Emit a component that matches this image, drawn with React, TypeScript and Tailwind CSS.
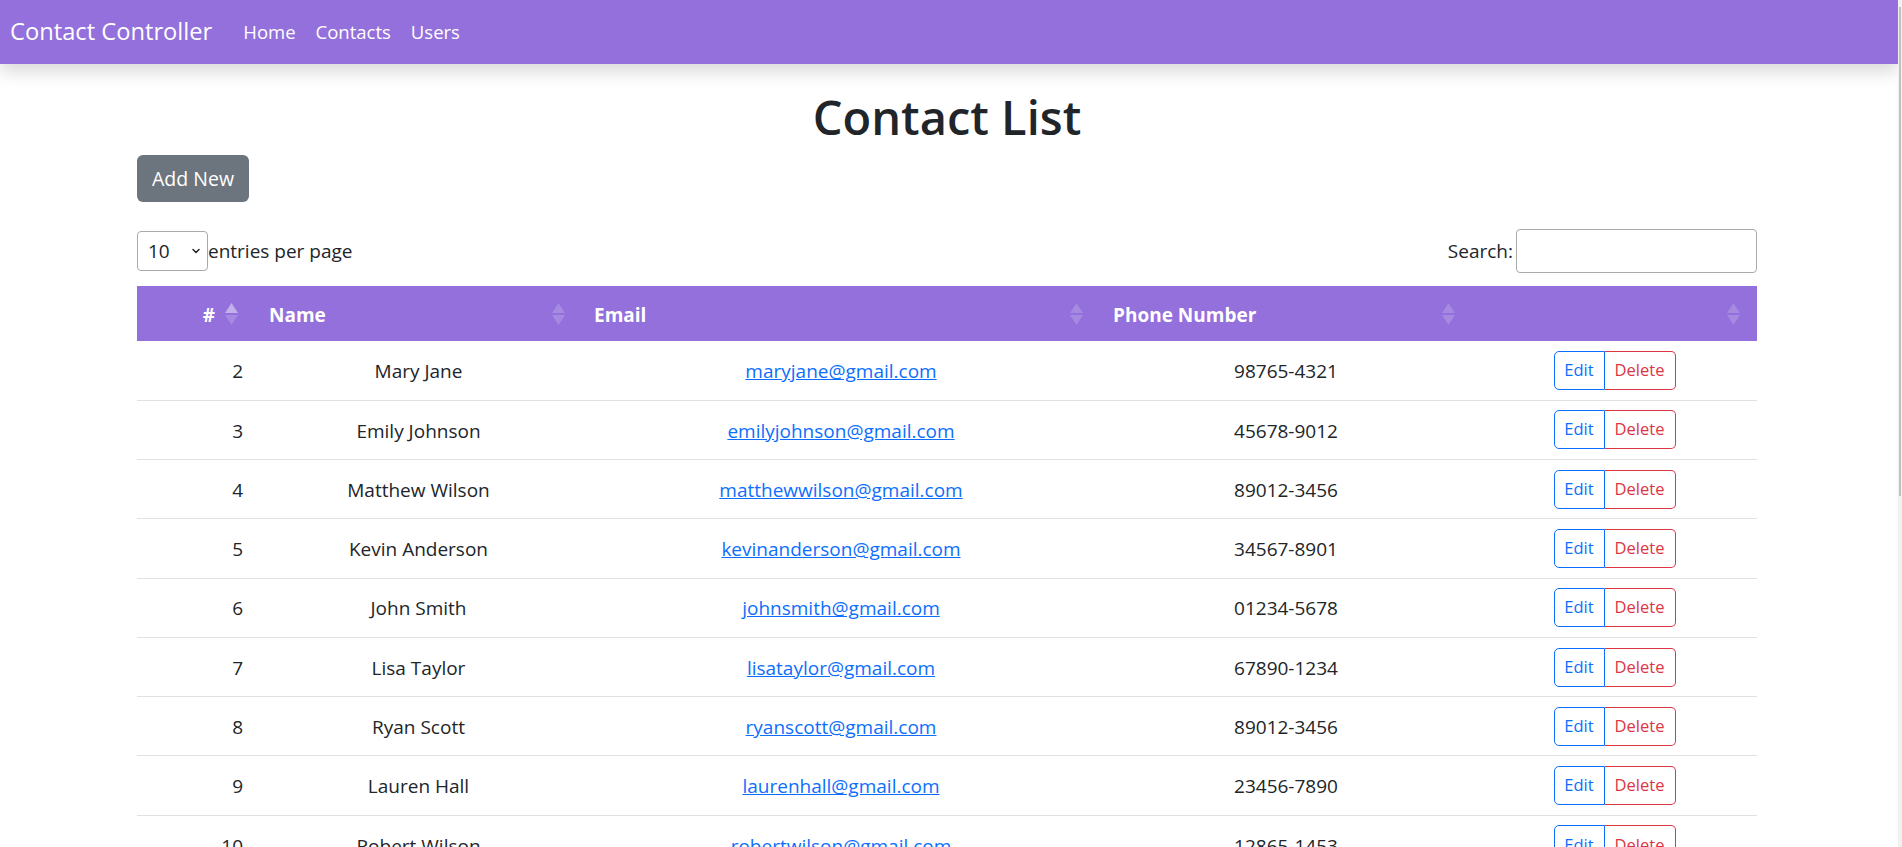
import { ChevronDown } from 'lucide-react'

const contacts = [
  { id: 2, name: 'Mary Jane', email: 'maryjane@gmail.com', phone: '98765-4321' },
  { id: 3, name: 'Emily Johnson', email: 'emilyjohnson@gmail.com', phone: '45678-9012' },
  { id: 4, name: 'Matthew Wilson', email: 'matthewwilson@gmail.com', phone: '89012-3456' },
  { id: 5, name: 'Kevin Anderson', email: 'kevinanderson@gmail.com', phone: '34567-8901' },
  { id: 6, name: 'John Smith', email: 'johnsmith@gmail.com', phone: '01234-5678' },
  { id: 7, name: 'Lisa Taylor', email: 'lisataylor@gmail.com', phone: '67890-1234' },
  { id: 8, name: 'Ryan Scott', email: 'ryanscott@gmail.com', phone: '89012-3456' },
  { id: 9, name: 'Lauren Hall', email: 'laurenhall@gmail.com', phone: '23456-7890' },
  { id: 10, name: 'Robert Wilson', email: 'robertwilson@gmail.com', phone: '12865-1453' },
  { id: 11, name: 'Sarah Brown', email: 'sarahbrown@gmail.com', phone: '56789-0123' },
]

function SortIcon({ active = false }: { active?: boolean }) {
  return (
    <svg width="13" height="22" viewBox="0 0 13 22" className="shrink-0">
      <polygon points="6.5,0 13,10 0,10" fill="white" fillOpacity={active ? 0.45 : 0.18} />
      <polygon points="0,12 13,12 6.5,22" fill="white" fillOpacity={0.18} />
    </svg>
  )
}

const cols = 'grid grid-cols-[118px_327px_518px_372px_285px]'

export default function App() {
  return (
    <div
      className="flex h-[847px] w-full overflow-hidden bg-white text-[#212529]"
      style={{ fontFamily: '"Open Sans", "Noto Sans", sans-serif' }}
    >
      <div className="flex min-w-0 flex-1 flex-col">
        <nav className="flex h-[64px] shrink-0 items-center bg-[#9370db] text-white shadow-[0_8px_16px_rgba(0,0,0,0.15)]">
          <span className="ml-[10px] text-[23.7px] leading-none">Contact Controller</span>
          <div className="ml-[21px] flex text-[18.5px]">
            <a className="px-[10px]">Home</a>
            <a className="px-[10px]">Contacts</a>
            <a className="px-[10px]">Users</a>
          </div>
        </nav>

        <main className="ml-[137px] flex w-[1620px] flex-col">
          <h1 className="mt-[25px] mb-[10px] text-center text-[47px] leading-[1.2] font-semibold">
            Contact List
          </h1>

          <div>
            <button className="h-[47px] w-[112px] rounded-[6px] bg-[#6c757d] text-[19.5px] text-white">
              Add New
            </button>
          </div>

          <div className="mt-[27px] flex h-[44px] items-center justify-between text-[19px]">
            <div className="flex items-center">
              <div className="relative h-[40px] w-[71px]">
                <select className="h-full w-full appearance-none rounded-[4px] border border-[#aaa] bg-white pl-[10px] text-[19px] outline-none">
                  <option>10</option>
                </select>
                <ChevronDown
                  className="pointer-events-none absolute top-[14px] left-[53px] h-[12px] w-[12px]"
                  strokeWidth={3}
                />
              </div>
              <span>entries per page</span>
            </div>
            <div className="flex items-center">
              <span className="mr-[3px]">Search:</span>
              <input className="h-[44px] w-[241px] rounded-[4px] border border-[#aaa] outline-none" />
            </div>
          </div>

          <div className="mt-[13px] text-[19px]">
            <div className={`${cols} h-[55px] bg-[#9370db] font-bold text-white`}>
              <div className="flex items-center justify-end gap-[10px] pr-[17px]">
                <span className="mt-[3px]">#</span>
                <SortIcon active />
              </div>
              <div className="flex items-center justify-between pr-[17px] pl-[14px]">
                <span className="mt-[3px]">Name</span>
                <SortIcon />
              </div>
              <div className="flex items-center justify-between pr-[17px] pl-[12px]">
                <span className="mt-[3px]">Email</span>
                <SortIcon />
              </div>
              <div className="flex items-center justify-between pr-[17px] pl-[13px]">
                <span className="mt-[3px]">Phone Number</span>
                <SortIcon />
              </div>
              <div className="flex items-center justify-end pr-[17px]">
                <SortIcon />
              </div>
            </div>

            {contacts.map((c) => (
              <div key={c.id} className={`${cols} h-[59.3px] border-b border-[#dee2e6]`}>
                <div className="flex items-center justify-end pt-[2px] pr-[12px]">{c.id}</div>
                <div className="flex items-center justify-center pt-[2px]">{c.name}</div>
                <div className="flex items-center justify-center pt-[2px]">
                  <a className="text-[#0d6efd] underline">{c.email}</a>
                </div>
                <div className="flex items-center justify-center pt-[2px]">{c.phone}</div>
                <div className="flex items-center justify-center">
                  <div className="flex h-[39px] text-[16.5px]">
                    <button className="w-[51px] rounded-l-[5px] border border-[#0d6efd] text-[#0d6efd]">
                      Edit
                    </button>
                    <button className="w-[71px] rounded-r-[5px] border border-l-0 border-[#dc3545] text-[#dc3545]">
                      Delete
                    </button>
                  </div>
                </div>
              </div>
            ))}
          </div>
        </main>
      </div>

      <div className="flex w-[4px] shrink-0 justify-center bg-[#f1f1f1]">
        <div className="mt-[7px] h-[489px] w-[2px] bg-[#c1c1c1]" />
      </div>
    </div>
  )
}
